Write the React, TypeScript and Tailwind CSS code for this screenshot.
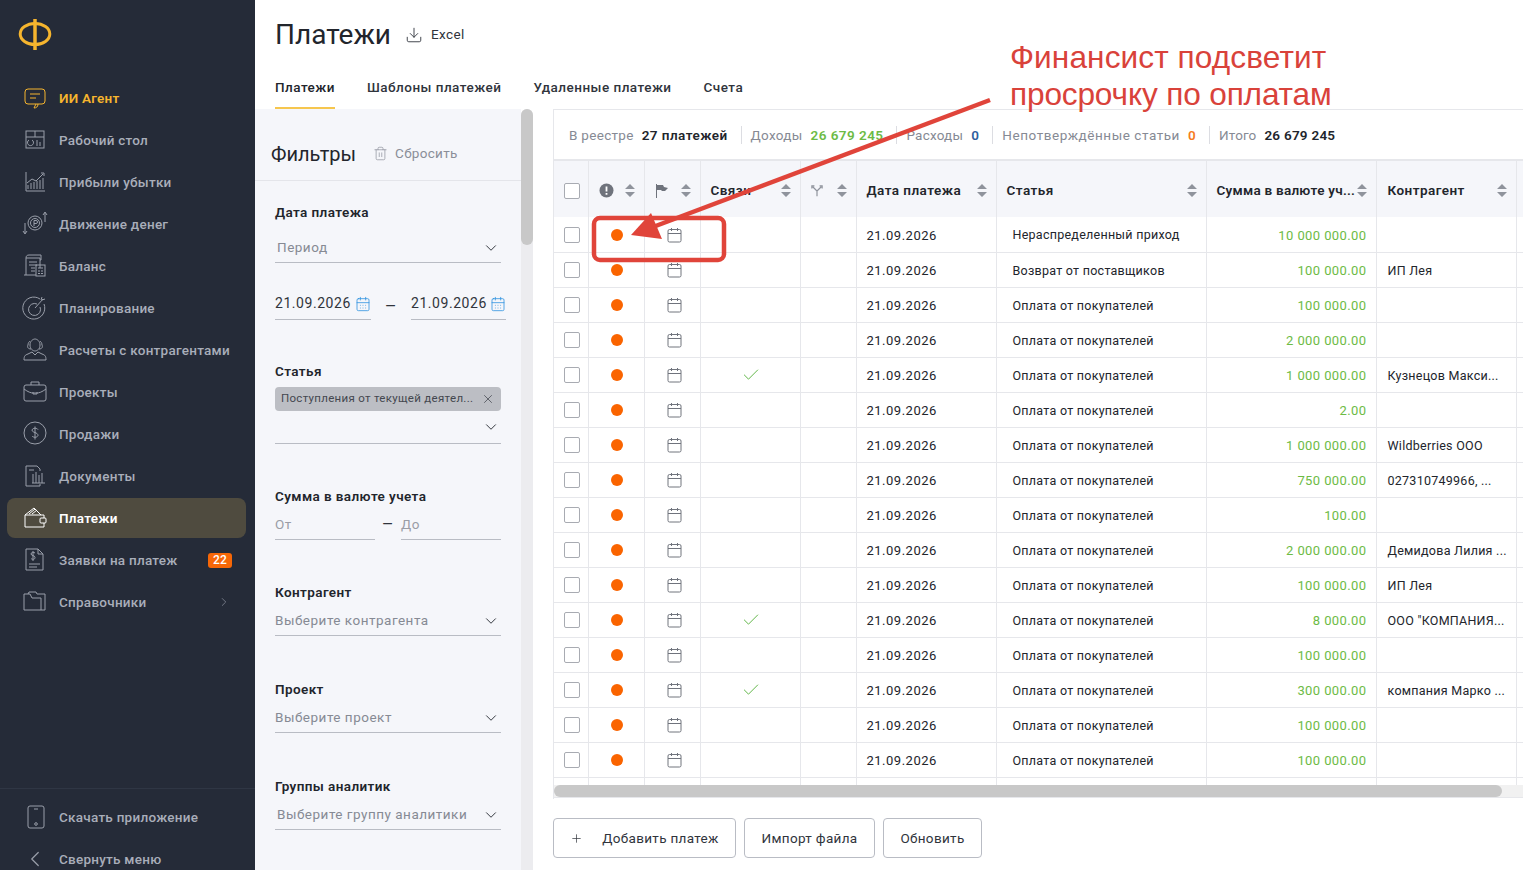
import { Check, ChevronDown, ChevronRight, ChevronLeft, Plus, X, Trash2, Download, CalendarDays } from 'lucide-react';
import type { ReactNode } from 'react';

const font = "font-['Roboto','Liberation_Sans',sans-serif]";

// Sidebar icons, drawn thin to follow the reference
const ic = {
	agent: (
		<>
			<rect x="3" y="4" width="20" height="15" rx="3" />
			<path d="M8 9h10M8 13h6M14 19l-2 4c2 0 4-1 4-4" />
		</>
	),
	desk: (
		<>
			<rect x="4" y="4" width="18" height="17" />
			<path d="M4 10h18M13 4v6M10 13a3 3 0 1 1-3 0M15 13v6M18 15v4" />
		</>
	),
	chart: (
		<path d="M4 3v19h19M6 20v-4M9 20v-6M12 20v-7M15 20v-8M18 20v-9M21 20v-11M5 14l5-4 4 2 7-7M19 4h3v3" />
	),
	money: (
		<>
			<circle cx="13" cy="12" r="7" />
			<circle cx="13" cy="12" r="4.500" />
			<path d="M12 15V9.500h2a1.500 1.500 0 0 1 0 3h-2M3 12v10M1 20l2 3 2-3M23 11V2M21 4l2-3 2 3" />
		</>
	),
	balance: (
		<>
			<path d="M4 22V5h14v10M2 22h12M4 5c0-2 1-3 3-3h12v5h-1M7 9h8M7 12h8M9 15h4M9 18h4" />
			<rect x="14" y="12" width="9" height="11" />
			<path d="M16 15h5M16 18h2M19 18h2M16 20.500h2M19 20.500h2" />
		</>
	),
	plan: (
		<>
			<path d="M18 4a11 11 0 1 0 4 5" />
			<path d="M15 9a6 6 0 1 0 3 3M13 13l8-9M19 5l1-3M20 5l3-1" />
		</>
	),
	people: (
		<>
			<path d="M8 8c0-4 3-6 5-6s5 2 5 6-3 6-5 6-5-2-5-6Z" />
			<path d="M9 12c-3 0-4-2-3-4 0-2 1-3 2-4M17 12c3 0 4-2 3-4 0-2-1-3-2-4M2 23c0-4 1-5 4-6l4-2 3 3 3-3 4 2c3 1 4 2 4 6Z" />
		</>
	),
	case: (
		<>
			<rect x="2" y="6" width="22" height="16" rx="2" />
			<path d="M9 6V3h8v3M2 10c4 3 7 4 9 4h4c2 0 5-1 9-4M11 13v2h4v-2" />
		</>
	),
	dollar: (
		<>
			<circle cx="13" cy="12" r="11" />
			<path d="M16 8.500c-1-1.500-5-2-6 .5 0 3 6 2 6 5.500-1 2.500-5 2-6 .5M13 5.500v13" />
		</>
	),
	docs: (
		<>
			<path d="M15 3H4v20h14v-2M15 3l3 3v2M7 7h5" />
			<path d="M10 20h13M11 11v9M14 9v11M17 12v8M20 10v10" />
		</>
	),
	wallet: (
		<>
			<path d="M3 10v12h19v-4M22 13v-3H3l9-7 7 7M7 9l6-5M10 9l5-4" />
			<rect x="18" y="13" width="6" height="5" rx="1" />
		</>
	),
	bill: (
		<>
			<path d="M4 2h12l5 5v16H4ZM16 2v5h5M7 17h11M7 20h8" />
			<path d="M13 6c-1-1-4-1-4 1s4 1 4 3.500-3 2-4 1M11 4v10" />
		</>
	),
	folder: <path d="M2 8V21h17V9h-9L8 5H2v3M6 5l1-2h7l1 2h8v16h-4" />,
	phone: (
		<>
			<rect x="6" y="2" width="16" height="22" rx="2" />
			<path d="M12 5h4" />
			<circle cx="14" cy="20" r="1.300" />
		</>
	),
};

function NavIcon({ d, className }: { d: ReactNode; className: string }) {
	return (
		<svg width="26" height="26" viewBox="0 0 26 26" fill="none" stroke="currentColor" strokeWidth="1" className={`shrink-0 ${className}`}>
			{d}
		</svg>
	);
}

const nav = [
	{ label: 'Рабочий стол', icon: ic.desk },
	{ label: 'Прибыли убытки', icon: ic.chart },
	{ label: 'Движение денег', icon: ic.money },
	{ label: 'Баланс', icon: ic.balance },
	{ label: 'Планирование', icon: ic.plan },
	{ label: 'Расчеты с контрагентами', icon: ic.people },
	{ label: 'Проекты', icon: ic.case },
	{ label: 'Продажи', icon: ic.dollar },
	{ label: 'Документы', icon: ic.docs },
];

function Sidebar() {
	return (
		<aside className="w-[255px] h-full shrink-0 bg-[#252b38] flex flex-col text-[13.5px] tracking-[0.25px] font-medium text-[#a9aeba]">
			<div className="h-[77px] pl-[18px] pt-[18px]">
				<svg width="34" height="34" viewBox="0 0 34 34" fill="none" stroke="#f6b52e" strokeWidth="3">
					<ellipse cx="17" cy="16" rx="14.800" ry="10.500" />
					<path d="M17 1v31" strokeWidth="3.500" />
				</svg>
			</div>
			<div className="flex flex-col">
				<div className="h-[42px] flex items-center pl-[22px] gap-[11px] text-[#f6b52e] font-semibold">
					<NavIcon d={ic.agent} className="text-[#f6b52e]" />
					ИИ Агент
				</div>
				{nav.map((item) => (
					<div key={item.label} className="h-[42px] flex items-center pl-[22px] gap-[11px]">
						<NavIcon d={item.icon} className="text-[#9a9faa]" />
						{item.label}
					</div>
				))}
				<div className="h-[40px] my-px ml-[7px] mr-[9px] rounded-lg bg-[#4f4b3f] flex items-center pl-[15px] gap-[11px] text-white font-semibold">
					<NavIcon d={ic.wallet} className="text-white" />
					Платежи
				</div>
				<div className="h-[42px] flex items-center pl-[22px] pr-[23px] gap-[11px]">
					<NavIcon d={ic.bill} className="text-[#9a9faa]" />
					Заявки на платеж
					<span className="ml-auto w-6 h-[15px] rounded-[3px] bg-[#f76707] text-white text-[12px] leading-[15px] text-center">22</span>
				</div>
				<div className="h-[42px] flex items-center pl-[22px] pr-[24px] gap-[11px]">
					<NavIcon d={ic.folder} className="text-[#9a9faa]" />
					Справочники
					<ChevronRight size={14} strokeWidth={1.2} className="ml-auto text-[#8f94a0]" />
				</div>
			</div>
			<div className="mt-auto border-t border-[#2f3644] pt-[7px] h-[82px]">
				<div className="h-[42px] flex items-center pl-[22px] gap-[11px]">
					<NavIcon d={ic.phone} className="text-[#9a9faa]" />
					Скачать приложение
				</div>
				<div className="h-[42px] flex items-center pl-[22px] gap-[11px]">
					<ChevronLeft size={26} strokeWidth={1.1} className="text-[#9a9faa]" />
					Свернуть меню
				</div>
			</div>
		</aside>
	);
}

function Label({ children, className }: { children: ReactNode; className: string }) {
	return <div className={`text-[13.5px] tracking-[0.4px] leading-5 font-semibold text-[#22252c] ${className}`}>{children}</div>;
}

function SelectField({ text, className }: { text: string; className: string }) {
	return (
		<div className={`h-[30px] border-b border-[#b9bcc4] flex items-center justify-between pr-px text-[13.5px] tracking-[0.5px] text-[#868a94] ${className}`}>
			{text}
			<ChevronDown size={18} strokeWidth={1.3} className="text-[#30343c]" />
		</div>
	);
}

function Filters() {
	return (
		<div className="w-[278px] shrink-0 h-full flex overflow-hidden">
			<div className="w-[266px] bg-[#f5f6fa]">
				<div className="h-[72px] pt-[18px] border-b border-[#e4e5ea] flex items-center pl-4 text-[#8a8e98] text-[13.5px] tracking-[0.3px]">
					<span className="text-[20px] tracking-normal text-[#22252c] mr-[17px]">Фильтры</span>
					<Trash2 size={15} strokeWidth={1.1} className="mr-[7px]" />
					Сбросить
				</div>
				<div className="px-5">
					<Label className="mt-[21px]">Дата платежа</Label>
					<SelectField text="Период" className="mt-[11px] pl-0.5" />
					<div className="mt-[27px] flex items-center text-[14px] tracking-[0.55px] text-[#30343c]">
						<div className="w-[96px] shrink-0 h-[30px] border-b border-[#b9bcc4] flex items-center justify-between pb-0.5">
							21.09.2026
							<CalendarDays size={16} strokeWidth={1.2} className="text-[#2f93e0]" />
						</div>
						<span className="w-[40px] shrink-0 text-center text-[18px]">–</span>
						<div className="w-[95px] shrink-0 h-[30px] border-b border-[#b9bcc4] flex items-center justify-between pb-0.5">
							21.09.2026
							<CalendarDays size={16} strokeWidth={1.2} className="text-[#2f93e0]" />
						</div>
					</div>
					<Label className="mt-[41px]">Статья</Label>
					<div className="mt-[6px] h-6 rounded bg-[#bcbec4] flex items-center justify-between pl-1.5 pr-1.5 text-[11.5px] tracking-[0.3px] text-[#44474f]">
						Поступления от текущей деятел...
						<X size={14} strokeWidth={1.3} />
					</div>
					<div className="h-[33px] border-b border-[#b9bcc4] flex items-center justify-end pr-px">
						<ChevronDown size={18} strokeWidth={1.3} className="text-[#30343c]" />
					</div>
					<Label className="mt-[42px]">Сумма в валюте учета</Label>
					<div className="mt-[2px] flex items-center text-[13.5px] tracking-[0.5px] text-[#9a9da6]">
						<div className="w-[100px] h-[32px] pt-0.5 border-b border-[#b9bcc4] flex items-center">От</div>
						<span className="w-[26px] text-center text-[18px] leading-none text-[#30343c]">–</span>
						<div className="w-[100px] h-[32px] pt-0.5 border-b border-[#b9bcc4] flex items-center">До</div>
					</div>
					<Label className="mt-[42px]">Контрагент</Label>
					<SelectField text="Выберите контрагента" className="mt-[3px] h-[31px] pt-px" />
					<Label className="mt-[43px]">Проект</Label>
					<SelectField text="Выберите проект" className="mt-[3px] h-[31px] pt-px" />
					<Label className="mt-[43px]">Группы аналитик</Label>
					<SelectField text="Выберите группу аналитики" className="mt-[3px] h-[31px] pt-px pl-0.5" />
				</div>
			</div>
			<div className="w-3 bg-[#ececef] rounded-t-md">
				<div className="h-[136px] rounded-md bg-[#c8c8c8]" />
			</div>
		</div>
	);
}

function Stat({
	label,
	value,
	color,
	labelClass = 'tracking-[0.3px]',
	valueClass = 'tracking-[0.45px]',
	border = true,
}: {
	label: string;
	value: string;
	color: string;
	labelClass?: string;
	valueClass?: string;
	border?: boolean;
}) {
	return (
		<div className={`h-[18px] flex items-center pr-[13px] pl-[9px] gap-[8px] ${border ? 'border-r border-[#dcdde2]' : ''}`}>
			<span className={`text-[#868a94] ${labelClass}`}>{label}</span>
			<span className={`font-semibold ${valueClass} ${color}`}>{value}</span>
		</div>
	);
}

function Sort() {
	return (
		<svg width="10" height="13" viewBox="0 0 10 13" fill="#8f939c" className="shrink-0 translate-x-px">
			<path d="M5 0l5 5H0ZM5 13l5-5H0Z" />
		</svg>
	);
}

function Box() {
	return <div className="w-4 h-4 rounded-[2px] border-[1.5px] border-[#a8abb2] bg-white" />;
}

function Cal() {
	return (
		<svg width="15" height="16" viewBox="0 0 15 16" fill="none" stroke="#70747d" strokeWidth="1" className="ml-[12px]">
			<rect x="1" y="2.500" width="13" height="12.500" rx="1.500" />
			<path d="M1 6.500h13M4.500 1v3M10.500 1v3" />
		</svg>
	);
}

const rows: [string, string, string, boolean?][] = [
	['Нераспределенный приход', '10 000 000.00', ''],
	['Возврат от поставщиков', '100 000.00', 'ИП Лея'],
	['Оплата от покупателей', '100 000.00', ''],
	['Оплата от покупателей', '2 000 000.00', ''],
	['Оплата от покупателей', '1 000 000.00', 'Кузнецов Макси...', true],
	['Оплата от покупателей', '2.00', ''],
	['Оплата от покупателей', '1 000 000.00', 'Wildberries ООО'],
	['Оплата от покупателей', '750 000.00', '027310749966, ...'],
	['Оплата от покупателей', '100.00', ''],
	['Оплата от покупателей', '2 000 000.00', 'Демидова Лилия ...'],
	['Оплата от покупателей', '100 000.00', 'ИП Лея'],
	['Оплата от покупателей', '8 000.00', 'ООО "КОМПАНИЯ...', true],
	['Оплата от покупателей', '100 000.00', ''],
	['Оплата от покупателей', '300 000.00', 'компания Марко ...', true],
	['Оплата от покупателей', '100 000.00', ''],
	['Оплата от покупателей', '100 000.00', ''],
	['', '', ''],
];

const th = 'border-r border-[#e6e7eb] px-2.5 pt-[3px] font-semibold text-left';
const td = 'border-r border-b border-[#e6e7eb] px-2.5 pt-px';
const tdText = 'border-r border-b border-[#e6e7eb] pt-[3px]';

function HeadCell({ children, className = '' }: { children?: ReactNode; className?: string }) {
	return (
		<th className={`${th} ${className}`}>
			<div className="flex items-center justify-between">
				<span className="whitespace-nowrap">{children}</span>
				<Sort />
			</div>
		</th>
	);
}

function PaymentsTable() {
	return (
		<table className="table-fixed w-[979px] border-collapse text-[13.5px] tracking-[0.45px] text-[#22252c]">
			<colgroup>
				<col className="w-[34px]" />
				<col className="w-[56px]" />
				<col className="w-[56px]" />
				<col className="w-[100px]" />
				<col className="w-[56px]" />
				<col className="w-[140px]" />
				<col className="w-[210px]" />
				<col className="w-[170px]" />
				<col className="w-[140px]" />
				<col className="w-[17px]" />
			</colgroup>
			<thead>
				<tr className="h-[56px] bg-[#f5f6fa]">
					<th className={th}>
						<Box />
					</th>
					<HeadCell>
						<svg width="15" height="15" viewBox="0 0 15 15" className="block">
							<circle cx="7.500" cy="7.500" r="7" fill="#6f737c" />
							<path d="M7.500 3.500v5M7.500 10v1.800" stroke="#fff" strokeWidth="1.800" />
						</svg>
					</HeadCell>
					<HeadCell>
						<svg width="14" height="14" viewBox="0 0 14 14" className="block">
							<path d="M1.500 0v14" stroke="#6f737c" />
							<path d="M2 1h6l1 2 4 1-3 3H7L6 6H2Z" fill="#6f737c" />
						</svg>
					</HeadCell>
					<HeadCell>Связи</HeadCell>
					<HeadCell>
						<svg width="12" height="12" viewBox="0 0 14 14" fill="none" stroke="#8f939c" strokeWidth="1.400" className="block">
							<path d="M7 13V7L2 2M7 7l5-5M1 4V1h3M10 1h3v3" />
						</svg>
					</HeadCell>
					<HeadCell>Дата платежа</HeadCell>
					<HeadCell>Статья</HeadCell>
					<HeadCell className="tracking-[0.25px]">Сумма в валюте уч...</HeadCell>
					<HeadCell className="pl-[11px]">Контрагент</HeadCell>
					<th />
				</tr>
			</thead>
			<tbody className="text-[12.5px] tracking-[0.26px]">
				{rows.map((r, i) => (
					<tr key={i} className="h-[35px]">
						<td className={td}>
							<Box />
						</td>
						<td className={td}>
							<div className="w-3 h-3 ml-[12px] rounded-full bg-[#fa6400]" />
						</td>
						<td className={td}>
							<Cal />
						</td>
						<td className={td}>
							{r[3] && <Check size={20} strokeWidth={1.1} className="mx-auto translate-x-px text-[#52b038]" />}
						</td>
						<td className={td} />
						<td className={`${tdText} px-2.5 text-[13px] tracking-[0.5px]`}>{r[1] && '21.09.2026'}</td>
						<td className={`${tdText} pl-[16px]`}>{r[0]}</td>
						<td className={`${tdText} pr-[9px] text-right text-[#6dbb45] text-[13px] tracking-[0.4px]`}>{r[1]}</td>
						<td className={`${tdText} pl-[11px] whitespace-nowrap overflow-hidden`}>{r[2]}</td>
						<td className="border-b border-[#e6e7eb]" />
					</tr>
				))}
			</tbody>
		</table>
	);
}

function Btn({ children, className }: { children: ReactNode; className: string }) {
	return (
		<button className={`h-10 rounded border border-[#b9bcc4] bg-white text-[13.5px] tracking-[0.33px] text-[#30343c] flex items-center justify-center ${className}`}>
			{children}
		</button>
	);
}

function Annotation() {
	return (
		<>
			<div className="absolute left-[995px] top-[38px] w-[360px] h-[71px] bg-white pl-[15px] pt-[1px] text-[31.6px] leading-[37px] font-['Liberation_Sans',sans-serif] text-[#d9423a]">
				<div className="tracking-[0.1px]">Финансист подсветит</div>
				<div className="tracking-[-0.15px]">просрочку по оплатам</div>
			</div>
			<svg className="absolute left-0 top-0 pointer-events-none" width="1523" height="870">
				<path d="M990 100 L645 230" stroke="#e0443a" strokeWidth="4.500" fill="none" />
				<path d="M631 235 L651 213 L662 239 Z" fill="#e0443a" />
				<rect x="594" y="218" width="130" height="42" rx="6" fill="none" stroke="#e0443a" strokeWidth="4.500" />
			</svg>
		</>
	);
}

export default function App() {
	return (
		<div className={`relative w-[1523px] h-[870px] overflow-hidden flex bg-white ${font}`}>
			<Sidebar />
			<main className="flex-1 min-w-0 flex flex-col">
				<header className="h-[109px] shrink-0 px-5 relative">
					<div className="h-[70px] flex items-center">
						<h1 className="text-[28px] text-[#22252c] mr-[14px] font-normal">Платежи</h1>
						<Download size={18} strokeWidth={1.2} className="text-[#30343c] mr-2" />
						<span className="text-[13.5px] tracking-[0.4px] text-[#30343c] mb-0.5">Excel</span>
					</div>
					<nav className="flex gap-8 text-[13.5px] tracking-[0.47px] font-medium text-[#30343c]">
						<div className="h-[39px] border-b-2 border-[#f6c64e] pt-[7px] text-[#22252c]">Платежи</div>
						<div className="pt-[7px]">Шаблоны платежей</div>
						<div className="pt-[7px]">Удаленные платежи</div>
						<div className="pt-[7px]">Счета</div>
					</nav>
				</header>
				<div className="flex-1 min-h-0 flex">
					<Filters />
					<section className="flex-1 min-w-0 pl-5">
						<div className="border-t border-l border-[#e6e7eb] h-[690px]">
							<div className="h-[51px] pt-px flex items-center pl-[6px] text-[13.5px] border-b-2 border-[#e6e7eb]">
								<Stat label="В реестре" value="27 платежей" color="text-[#22252c]" />
								<Stat label="Доходы" value="26 679 245" color="text-[#6dbb45]" />
								<Stat label="Расходы" value="0" color="text-[#2f5f9e]" labelClass="tracking-[0.2px]" />
								<Stat label="Непотверждённые статьи" value="0" color="text-[#f57c1f]" labelClass="tracking-[0.55px]" />
								<Stat label="Итого" value="26 679 245" color="text-[#22252c]" labelClass="tracking-[0.1px]" valueClass="tracking-[0.25px]" border={false} />
							</div>
							<div className="relative h-[637px] overflow-hidden border-b border-[#e6e7eb]">
								<PaymentsTable />
								<div className="absolute left-0 right-0 bottom-0 h-3 bg-[#f1f1f1]">
									<div className="w-[948px] h-3 rounded-md bg-[#c8c8c8]" />
								</div>
							</div>
						</div>
					</section>
				</div>
			</main>
			<div className="absolute left-[553px] top-[818px] flex gap-2">
				<Btn className="w-[183px] gap-[19px]">
					<Plus size={13} strokeWidth={1.3} />
					Добавить платеж
				</Btn>
				<Btn className="w-[131px]">Импорт файла</Btn>
				<Btn className="w-[99px]">Обновить</Btn>
			</div>
			<Annotation />
		</div>
	);
}
